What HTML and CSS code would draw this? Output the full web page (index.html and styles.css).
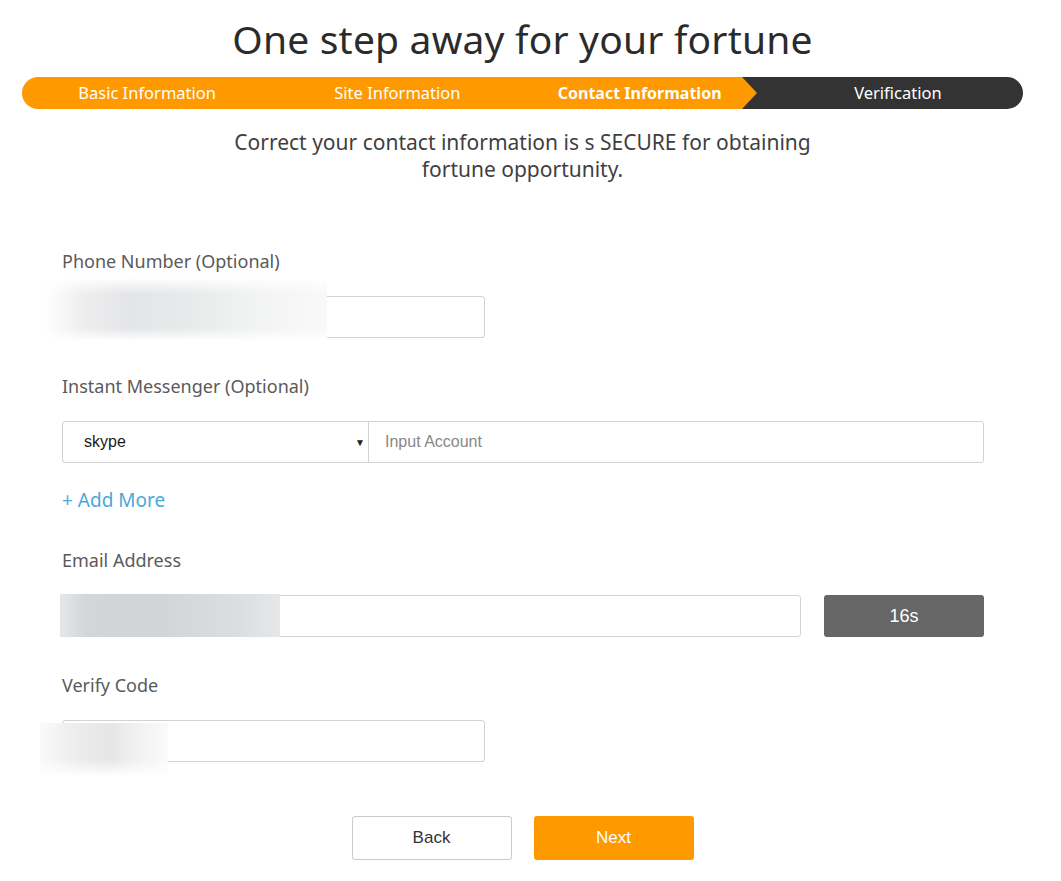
FILE: index.html
```html
<!DOCTYPE html>
<html lang="en">
<head>
<meta charset="utf-8">
<title>Contact Information</title>
<link rel="stylesheet" href="styles.css">
</head>
<body>
<div class="page">
  <h1 class="title">One step away for your fortune</h1>
  <div class="steps">
    <div class="step">Basic Information</div>
    <div class="step">Site Information</div>
    <div class="step step-current">Contact Information</div>
    <div class="step">Verification</div>
  </div>
  <p class="intro">Correct your contact information is s SECURE for obtaining fortune opportunity.</p>

  <form class="form">
    <div class="group">
      <label class="label">Phone Number (Optional)</label>
      <div class="field field-short">
        <input class="input" type="text">
        <span class="redact redact-phone"></span>
      </div>
    </div>

    <div class="group">
      <label class="label">Instant Messenger (Optional)</label>
      <div class="combo">
        <div class="select"><span class="select-value">skype</span><span class="caret">&#9660;</span></div>
        <input class="combo-input" type="text" placeholder="Input Account">
      </div>
      <a class="add-more">+ Add More</a>
    </div>

    <div class="group">
      <label class="label">Email Address</label>
      <div class="email-row">
        <div class="field field-email">
          <input class="input" type="text">
          <span class="redact redact-email"></span>
        </div>
        <button type="button" class="timer">16s</button>
      </div>
    </div>

    <div class="group">
      <label class="label">Verify Code</label>
      <div class="field field-short">
        <input class="input" type="text">
        <span class="redact redact-code"></span>
      </div>
    </div>

    <div class="actions">
      <button type="button" class="btn btn-back">Back</button>
      <button type="button" class="btn btn-next">Next</button>
    </div>
  </form>
</div>
</body>
</html>
```

FILE: styles.css
```css
* { box-sizing: border-box; }

body {
  margin: 0;
  background: #fff;
  font-family: "Noto Sans", "Open Sans", sans-serif;
  color: #333;
}

.page {
  width: 1001px;
  margin: 0 0 0 22px;
}

.title {
  margin: 16px 0 15px;
  text-align: center;
  font-weight: 400;
  font-size: 39px;
  line-height: 46px;
  color: #2b2b2b;
  letter-spacing: 0.2px;
}

.steps {
  position: relative;
  display: grid;
  grid-template-columns: repeat(4, 1fr);
  height: 32px;
  border-radius: 16px;
  background: linear-gradient(to right, #ff9900 0, #ff9900 720px, #333 720px, #333 100%);
}

.steps::after {
  content: "";
  position: absolute;
  left: 720px;
  top: 0;
  border-top: 16px solid transparent;
  border-bottom: 16px solid transparent;
  border-left: 15px solid #ff9900;
}

.step {
  position: relative;
  z-index: 1;
  display: flex;
  align-items: center;
  justify-content: center;
  color: #fff;
  font-size: 16.5px;
  line-height: 32px;
}

.step-current {
  font-weight: 700;
  padding-right: 16px;
  font-size: 16px;
}

.intro {
  width: 620px;
  margin: 20px auto 0;
  text-align: center;
  font-size: 21px;
  line-height: 27px;
  color: #3f3f3f;
}

.form {
  padding: 66px 39px 0 40px;
}

.group {
  display: flex;
  flex-direction: column;
  align-items: flex-start;
  margin-bottom: 36px;
}

.label {
  font-size: 18px;
  line-height: 24px;
  color: #5a5a5a;
  margin-bottom: 23px;
}

.field {
  position: relative;
  height: 42px;
}

.field-short { width: 423px; }
.field-email { width: 739px; }

.input {
  display: block;
  width: 100%;
  height: 100%;
  border: 1px solid #cfd2d6;
  border-radius: 3px;
  background: #fff;
  font: 16px "Liberation Sans", Arial, sans-serif;
  padding: 0 20px;
  outline: none;
}

.redact {
  position: absolute;
  pointer-events: none;
}

.redact-phone {
  left: -18px;
  top: -17px;
  width: 283px;
  height: 61px;
  background:
    linear-gradient(to bottom, rgba(255,255,255,0.9) 0, rgba(255,255,255,0) 25%, rgba(255,255,255,0) 80%, rgba(255,255,255,0.9) 100%),
    linear-gradient(to right, #ffffff 0, #eeeeef 14%, #e4e5e7 30%, #e8e9ea 50%, #f2f3f3 75%, #f9f9f9 100%);
}

.redact-email {
  left: -2px;
  top: -1px;
  width: 220px;
  height: 43px;
  background: linear-gradient(to right, #e6e7e9 0, #d3d5d8 12%, #d2d4d7 45%, #dcdde0 80%, #e6e7e9 100%);
}

.redact-code {
  left: -22px;
  top: 3px;
  width: 128px;
  height: 52px;
  background:
    linear-gradient(to bottom, rgba(255,255,255,0) 0, rgba(255,255,255,0) 70%, rgba(255,255,255,0.9) 100%),
    linear-gradient(to right, #fafafa 0, #ececed 30%, #e6e6e7 55%, #f3f3f3 80%, #fafafa 100%);
}

.combo {
  display: flex;
  width: 922px;
  height: 42px;
  border: 1px solid #cfd2d6;
  border-radius: 3px;
  background: #fff;
}

.select {
  width: 306px;
  display: flex;
  align-items: center;
  justify-content: space-between;
  padding: 0 3px 0 21px;
  border-right: 1px solid #cfd2d6;
  font: 16px "Liberation Sans", Arial, sans-serif;
  color: #222;
}

.select-value {
  color: #1a1a1a;
}

.caret {
  font-size: 10px;
  color: #222;
}

.combo-input {
  flex: 1;
  border: 0;
  background: transparent;
  padding: 0 16px;
  font: 16px "Liberation Sans", Arial, sans-serif;
  outline: none;
}

.combo-input::placeholder {
  color: #888;
}

.add-more {
  margin-top: 25px;
  font-size: 19px;
  line-height: 24px;
  color: #4aa8d8;
  cursor: pointer;
}

.email-row {
  display: flex;
  gap: 23px;
  width: 922px;
}

.timer {
  width: 160px;
  height: 42px;
  border: 0;
  border-radius: 3px;
  background: #666;
  color: #fff;
  font: 18px "Liberation Sans", Arial, sans-serif;
}

.actions {
  display: flex;
  justify-content: center;
  gap: 22px;
  padding-top: 18px;
  margin-left: -1px;
}

.btn {
  width: 160px;
  height: 44px;
  border-radius: 3px;
  font: 17px "Liberation Sans", Arial, sans-serif;
  cursor: pointer;
}

.btn-back {
  background: #fff;
  border: 1px solid #c8ccd1;
  color: #333;
}

.btn-next {
  background: #ff9900;
  border: 0;
  color: #fff;
}
```
